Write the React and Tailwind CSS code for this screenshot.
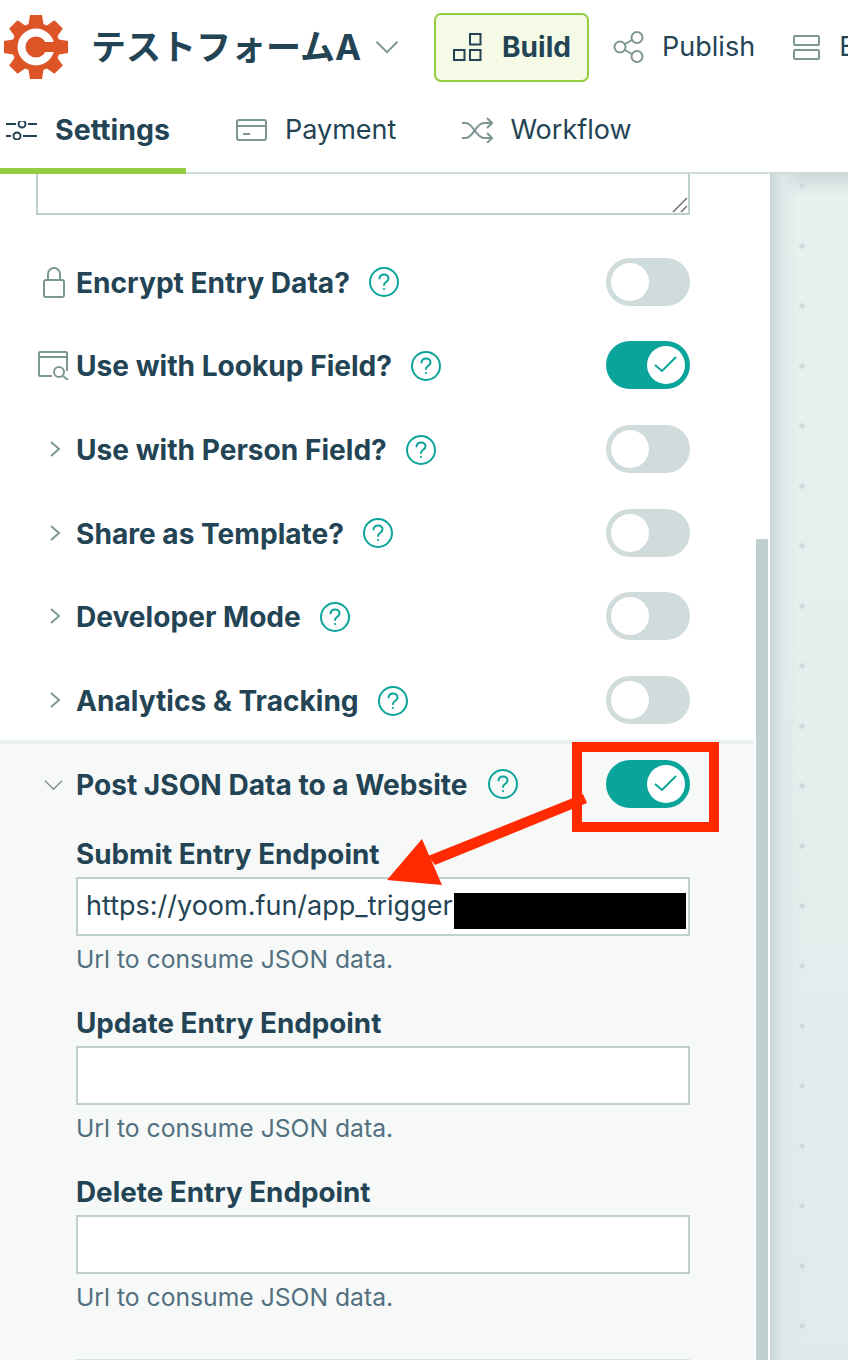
import { useState } from "react";

function HelpIcon() {
  return (
    <svg className="w-[30px] h-[30px] shrink-0" viewBox="0 0 30 30" fill="none" stroke="#0ba49a" strokeWidth="2">
      <circle cx="15" cy="15" r="14" />
      <path strokeLinecap="round" d="M10.5 11.5c.3-2.6 2.2-4 4.6-4 2.5 0 4.4 1.6 4.4 3.9 0 3.2-4.5 3.4-4.5 6.6" />
      <circle cx="15" cy="22" r="1.1" fill="#0ba49a" stroke="none" />
    </svg>
  );
}

function Toggle({ on }) {
  return (
    <div className={on ? "w-[84px] h-[48px] rounded-full bg-[#0ba49a] p-[5px] flex justify-end shrink-0" : "w-[84px] h-[48px] rounded-full bg-[#d0dcdc] p-[5px] flex justify-start shrink-0"}>
      <div className="w-[38px] h-[38px] rounded-full bg-white flex items-center justify-center">
        {on && (
          <svg className="w-[24px] h-[20px]" viewBox="0 0 24 20" fill="none" stroke="#0ba49a" strokeWidth="2">
            <path d="M1 10l7 6L22 2" />
          </svg>
        )}
      </div>
    </div>
  );
}

function LockIcon() {
  return (
    <svg className="w-[24px] h-[32px]" viewBox="0 0 24 32" fill="none" stroke="#7c9693" strokeWidth="2">
      <rect x="2" y="14" width="20" height="17" rx="2" />
      <path d="M6 14V8a6 6 0 0 1 12 0v6" />
    </svg>
  );
}

function LookupIcon() {
  return (
    <svg className="w-[31px] h-[29px] mt-[1px]" viewBox="0 0 31 29" fill="none" stroke="#7c9693" strokeWidth="2">
      <path d="M14 25H2a1 1 0 0 1-1-1V2a1 1 0 0 1 1-1h26a1 1 0 0 1 1 1v18" />
      <path d="M1 6h28" />
      <circle cx="21" cy="21" r="5" />
      <path d="M25 25l5 4" />
    </svg>
  );
}

function ChevronRight() {
  return (
    <svg className="w-[12px] h-[20px] ml-[3px]" viewBox="0 0 12 20" fill="none" stroke="#7c9693" strokeWidth="2">
      <path d="M2 3l8 7-8 7" />
    </svg>
  );
}

function ChevronDown({ className }) {
  return (
    <svg className={className} viewBox="0 0 20 12" fill="none" stroke="#7c9693" strokeWidth="1.6">
      <path d="M1 1.5l9 9 9-9" />
    </svg>
  );
}

function Logo() {
  const teeth = [0, 45, 90, 135, 180, 225, 270, 315];
  return (
    <svg className="w-[64px] h-[64px] ml-[4px] shrink-0" viewBox="0 0 64 64">
      {teeth.map((deg) => (
        <path key={deg} d="M26 0h12l2 12H24z" fill="#dd5526" transform={`rotate(${deg} 32 32)`} />
      ))}
      <circle cx="32" cy="32" r="24" fill="#dd5526" />
      <circle cx="32" cy="32" r="18.5" fill="white" />
      <circle cx="32" cy="32" r="10.5" fill="#dd5526" />
      <rect x="32" y="27" width="24" height="10" fill="#dd5526" />
    </svg>
  );
}

function Row({ icon, label, on }) {
  return (
    <div className="h-[83.67px] flex items-center pl-[36px] pr-[80px]">
      <div className="w-[35px] mr-[5px] flex items-center justify-center shrink-0">{icon}</div>
      <span className="pt-[2px] text-[28.1px] font-bold text-[#234454] whitespace-nowrap">{label}</span>
      <div className="ml-[19px] mt-[1px]"><HelpIcon /></div>
      <div className="ml-auto"><Toggle on={on} /></div>
    </div>
  );
}

function Field({ label, value }) {
  return (
    <div className="ml-[76px] w-[614px] mb-[28px]">
      <div className="pt-[1px] h-[34px] leading-[34px] text-[27.8px] font-bold text-[#234454] whitespace-nowrap">{label}</div>
      <div className="relative mt-[7px] h-[59px] border-2 border-[#bfcfcf] bg-white pl-[8px] flex items-center text-[27px] text-[#234454] whitespace-nowrap">
        {value}
        {value && <div className="absolute left-[376px] top-[14px] w-[232px] h-[36px] bg-black" />}
      </div>
      <div className="mt-[5px] h-[36px] leading-[36px] text-[24.7px] text-[#527080] whitespace-nowrap">Url to consume JSON data.</div>
    </div>
  );
}

export default function App() {
  const [rows] = useState([
    { label: "Encrypt Entry Data?", icon: <LockIcon />, on: false },
    { label: "Use with Lookup Field?", icon: <LookupIcon />, on: true },
    { label: "Use with Person Field?", icon: <ChevronRight />, on: false },
    { label: "Share as Template?", icon: <ChevronRight />, on: false },
    { label: "Developer Mode", icon: <ChevronRight />, on: false },
    { label: "Analytics & Tracking", icon: <ChevronRight />, on: false },
  ]);

  return (
    <div className="relative w-[848px] h-[1360px] overflow-hidden bg-white font-[Inter,'Noto_Sans_CJK_JP',sans-serif] text-[#234454]">
      {/* Header */}
      <div className="h-[174px]">
        <div className="h-[88px] pt-[6px] flex items-center overflow-hidden">
          <Logo />
          <span className="ml-[23px] text-[35px] font-bold whitespace-nowrap">テストフォームA</span>
          <ChevronDown className="w-[26px] h-[14px] ml-[13px] shrink-0" />
          <div className="ml-[34px] w-[155px] h-[69px] shrink-0 border-2 border-[#95cd41] bg-[#f4fae6] rounded-[7px] flex items-center pl-[17px]">
            <svg className="w-[29px] h-[28px]" viewBox="0 0 29 28" fill="none" stroke="#234454" strokeWidth="2">
              <rect x="17" y="1" width="10.5" height="10.5" />
              <rect x="1" y="17" width="10.5" height="10" />
              <rect x="17" y="17" width="10.5" height="10" />
            </svg>
            <span className="ml-[20px] text-[28px] font-bold">Build</span>
          </div>
          <svg className="ml-[24px] w-[31px] h-[32px] shrink-0" viewBox="0 0 31 32" fill="none" stroke="#7c9693" strokeWidth="2">
            <circle cx="7" cy="16" r="5.5" />
            <circle cx="24" cy="6.5" r="5.5" />
            <circle cx="24" cy="25.5" r="5.5" />
            <path d="M12 13l7-4M12 19l7 4" />
          </svg>
          <span className="ml-[18px] text-[27px] whitespace-nowrap">Publish</span>
          <svg className="ml-[38px] w-[27px] h-[25px] shrink-0" viewBox="0 0 27 25" fill="none" stroke="#7c9693" strokeWidth="2">
            <rect x="1" y="1" width="25" height="9" rx="1" />
            <rect x="1" y="15" width="25" height="9" rx="1" />
          </svg>
          <span className="ml-[19px] text-[27px] whitespace-nowrap">Entries</span>
        </div>
        <div className="h-[86px] border-b-2 border-[#cfdcdc] flex items-start">
          <div className="h-[86px] w-[186px] shrink-0 pt-[4px] border-b-[6px] border-[#94cc3f] flex items-center pl-[6px]">
            <svg className="w-[31px] h-[19px]" viewBox="0 0 31 19" fill="none" stroke="#234454" strokeWidth="2">
              <path d="M0 3h10M22 3h9M0 15h5M17 15h14" />
              <circle cx="16" cy="3" r="3.5" />
              <circle cx="11" cy="15" r="3.5" />
            </svg>
            <span className="ml-[18px] text-[28.5px] font-bold">Settings</span>
          </div>
          <div className="h-[84px] flex items-center ml-[50px]">
            <svg className="w-[31px] h-[22px]" viewBox="0 0 31 22" fill="none" stroke="#7c9693" strokeWidth="2">
              <rect x="1" y="1" width="29" height="20" rx="2" />
              <path d="M1 7h29M7 15h7" />
            </svg>
            <span className="ml-[18px] text-[27px]">Payment</span>
          </div>
          <div className="h-[84px] flex items-center ml-[66px]">
            <svg className="w-[31px] h-[26px]" viewBox="0 0 31 26" fill="none" stroke="#7c9693" strokeWidth="2">
              <path d="M0 6h4c7 0 10 15 18 15h8M0 21h4c7 0 10-15 18-15h8" />
              <path d="M25 1l5 5-5 5M25 16l5 5-5 5" />
            </svg>
            <span className="ml-[17px] text-[27px]">Workflow</span>
          </div>
        </div>
      </div>

      <div className="flex h-[1186px] overflow-hidden">
        {/* Settings panel */}
        <div className="relative w-[770px] shrink-0 bg-white">
          <div className="relative ml-[36px] w-[654px] h-[41px] bg-white border-x-2 border-b-2 border-[#bfcfcf]">
            <svg className="absolute right-0 bottom-0 w-[16px] h-[16px]" viewBox="0 0 16 16" fill="none" stroke="#6f6f6f" strokeWidth="1.5">
              <path d="M1 15L15 1M9 15l6-6" />
            </svg>
          </div>
          <div className="mt-[25px]">
            {rows.map((row) => (
              <Row key={row.label} {...row} />
            ))}
          </div>
          <div className="-mt-[2px] w-[754px] h-[700px] bg-[#f7f9f8] border-t-4 border-[#ebf2f0]">
            <div className="h-[80px] flex items-center pl-[36px] pr-[64px]">
              <div className="w-[35px] mr-[5px] flex items-center justify-center shrink-0">
                <ChevronDown className="w-[19px] h-[12px] mt-[3px]" />
              </div>
              <span className="pt-[2px] text-[28.1px] font-bold whitespace-nowrap">Post JSON Data to a Website</span>
              <div className="ml-[20px] mt-[1px]"><HelpIcon /></div>
              <div className="ml-auto"><Toggle on /></div>
            </div>
            <div className="mt-[12px]">
              <Field label="Submit Entry Endpoint" value="https://yoom.fun/app_trigger" />
              <Field label="Update Entry Endpoint" />
              <Field label="Delete Entry Endpoint" />
              <div className="ml-[76px] w-[614px] mt-[44px] border-t border-[#d5e5e2]" />
            </div>
          </div>
          {/* Scrollbar thumb */}
          <div className="absolute left-[756px] top-[365px] w-[12px] bottom-0 bg-[#bfcfcf]" />
        </div>

        {/* Canvas */}
        <div className="flex-1 bg-[linear-gradient(90deg,#c9d5d5_0px,#dfe8e8_12px,transparent_30px),linear-gradient(180deg,#cdd9d9_0px,transparent_22px),radial-gradient(circle_at_center,#cfdada_2.5px,transparent_3px),linear-gradient(180deg,#e9f1f0,#e1e9ea)] bg-[size:100%_100%,100%_100%,60px_60px,100%_100%] bg-[position:0_0,0_0,2px_-18px,0_0]" />
      </div>

      {/* Red annotation over the screenshot */}
      <div className="absolute left-[572px] top-[742px] w-[147px] h-[90px] border-[10px] border-[#ff2a00]" />
      <svg className="absolute left-[380px] top-[790px] w-[210px] h-[100px]" viewBox="380 790 210 100" fill="#ff2a00">
        <path d="M583 794l4 9-152 62-7-9z" />
        <path d="M387 880l35-41 20 46z" />
      </svg>
    </div>
  );
}
